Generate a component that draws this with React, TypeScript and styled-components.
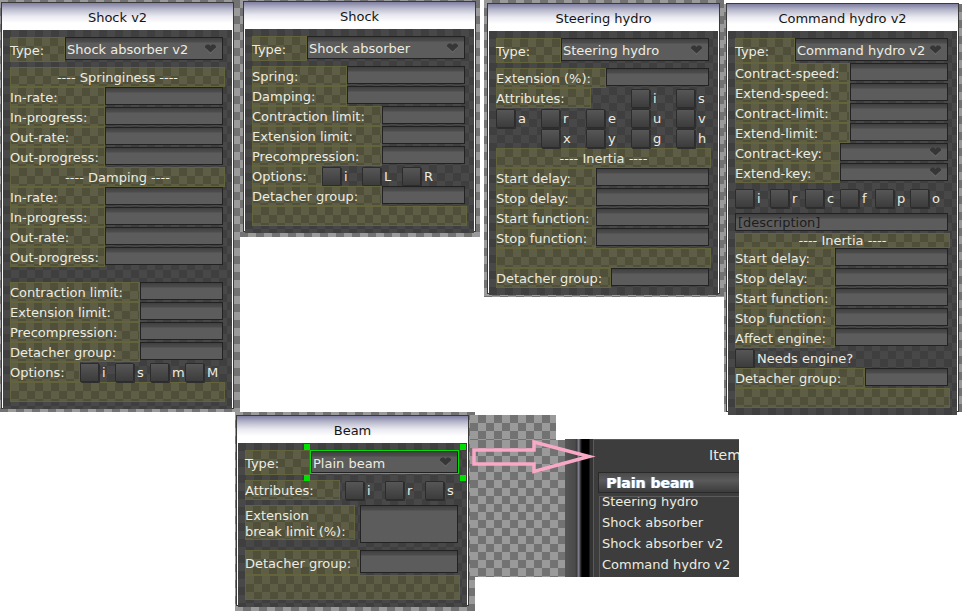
import React from "react";
import styled, { createGlobalStyle } from "styled-components";

const Global = createGlobalStyle`
  html, body { margin: 0; padding: 0; background: #fff; }
  #root { width: 976px; height: 616px; }
  * { box-sizing: border-box; }
`;

const checker = (a: string, b: string, s: number) => `
  background-color: ${a};
  background-image: conic-gradient(${b} 25%, transparent 0 50%, ${b} 0 75%, transparent 0);
  background-size: ${s * 2}px ${s * 2}px;
`;

const Canvas = styled.div`
  position: relative;
  width: 976px;
  height: 616px;
  overflow: hidden;
  background: #fff;
  font-family: "DejaVu Sans", sans-serif;
  font-size: 13px;
  color: #ecece0;
`;

const Backdrop = styled.div<{ $x: number; $y: number; $w: number; $h: number }>`
  position: absolute;
  left: ${(p) => p.$x}px;
  top: ${(p) => p.$y}px;
  width: ${(p) => p.$w}px;
  height: ${(p) => p.$h}px;
  ${checker("#9a9a9a", "#727272", 8)}
`;

const Win = styled.section<{ $x: number; $y: number; $w: number; $h: number }>`
  position: absolute;
  left: ${(p) => p.$x}px;
  top: ${(p) => p.$y}px;
  width: ${(p) => p.$w}px;
  height: ${(p) => p.$h}px;
  display: flex;
  flex-direction: column;
  background: #fff;
  border: 1px solid #3a3a3a;
`;

const Title = styled.h2`
  margin: 0;
  padding-top: 2px;
  height: 27px;
  flex: none;
  display: flex;
  align-items: center;
  justify-content: center;
  font-size: 13px;
  font-weight: 400;
  color: #151515;
  background: linear-gradient(#7f7fa0 0, #b8b8cc 6px, #e8e8f0 13px, #fff 20px);
`;

const Body = styled.div`
  flex: 1;
  margin: 0 1px 2px 1px;
  padding: 7px;
  ${checker("#3f3f3f", "#484848", 8)}
`;

const Row = styled.div<{ $h?: number }>`
  display: flex;
  align-items: flex-start;
  height: ${(p) => p.$h ?? 20}px;
`;

const Label = styled.div<{ $w: number; $h?: number }>`
  flex: none;
  width: ${(p) => p.$w}px;
  height: ${(p) => p.$h ?? 20}px;
  padding-top: 2px;
  display: flex;
  align-items: center;
  line-height: 16px;
  white-space: nowrap;
  border: 1px solid #63633c;
  border-left-width: 0;
  box-shadow: inset 1px 0 0 #63633c;
  ${checker("#5e5e47", "#4f4f3a", 8)}
`;

const Section = styled.div<{ $h?: number }>`
  width: 215px;
  height: ${(p) => p.$h ?? 20}px;
  display: flex;
  align-items: center;
  justify-content: center;
  border: 1px solid #63633c;
  white-space: nowrap;
  ${checker("#5e5e47", "#4f4f3a", 8)}
`;

const fieldFace = `
  border: 1px solid #222;
  background: linear-gradient(#3f3f3f 0, #474747 2px, #4c4c4c 4px, #5c5c5c 5px, #5c5c5c 100%);
`;

const Field = styled.div<{ $h?: number }>`
  flex: 1;
  height: ${(p) => p.$h ?? 18}px;
  margin-right: 2px;
  padding-left: 2px;
  color: #1d1d1d;
  line-height: 18px;
  overflow: hidden;
  ${fieldFace}
`;

const SelectBox = styled.div<{ $h?: number }>`
  flex: 1;
  position: relative;
  height: ${(p) => p.$h ?? 18}px;
  margin-right: 2px;
  padding: 2px 0 0 1px;
  display: flex;
  align-items: center;
  white-space: nowrap;
  ${fieldFace}
`;

const PickedSelect = styled(SelectBox)`
  margin-left: 1px;
  margin-top: 1px;
  box-shadow: 0 0 0 1px #00e000;
`;

const Heart = styled.svg`
  position: absolute;
  right: 5px;
  top: 50%;
  margin-top: -5px;
  width: 13px;
  height: 10px;
`;

const Handle = styled.i<{ $l?: number; $r?: number; $t?: number; $b?: number }>`
  position: absolute;
  width: 6px;
  height: 6px;
  background: #00e000;
  ${(p) => (p.$l !== undefined ? `left:${p.$l}px;` : "")}
  ${(p) => (p.$r !== undefined ? `right:${p.$r}px;` : "")}
  ${(p) => (p.$t !== undefined ? `top:${p.$t}px;` : "")}
  ${(p) => (p.$b !== undefined ? `bottom:${p.$b}px;` : "")}
`;

const Checks = styled.div<{ $pitch: number; $off?: number }>`
  display: grid;
  grid-auto-flow: column;
  grid-auto-columns: ${(p) => p.$pitch}px;
  margin-left: ${(p) => p.$off ?? 0}px;
`;

const Check = styled.label`
  display: flex;
  height: 20px;
  align-items: center;
  white-space: nowrap;
`;

const Box = styled.span`
  flex: none;
  width: 19px;
  height: 19px;
  margin-right: 3px;
  border: 1px solid #2c2c2c;
  border-radius: 1px;
  background: linear-gradient(#565656, #3c3c3c);
  box-shadow: 1px 1px 0 #2e2e2e;
`;

const Spacer = styled.div<{ $h: number; $w?: number }>`
  height: ${(p) => p.$h}px;
  width: ${(p) => p.$w ?? 0}px;
  flex: none;
`;

const Arrow = styled.svg`
  position: absolute;
  left: 468px;
  top: 436px;
  width: 130px;
  height: 42px;
`;

/* Cropped picture of the item list */
const Crop = styled.div`
  position: absolute;
  left: 565px;
  top: 439px;
  width: 174px;
  height: 138px;
  display: flex;
  overflow: hidden;
  background: linear-gradient(90deg, #555 0, #4a4a4a 10px, #3a3a3a 12px, #7c7c8c 13px, #7c7c8c 14px, #444 15px, #000 17px, #000 24px, #333 25px);
`;

const CropPanel = styled.div`
  margin: 0 0 0 28px;
  flex: 1;
  min-width: 0;
  padding: 1px 0 0 0;
  display: flex;
  flex-direction: column;
  background: #3d3d3d;
  border: 1px solid #5a5a5a;
  border-right: 0;
  border-bottom: 0;
`;

const CropTitle = styled.div`
  height: 27px;
  padding-left: 115px;
  display: flex;
  align-items: center;
  white-space: nowrap;
  font-size: 14px;
`;

const Picked = styled.div`
  height: 21px;
  margin: 4px 0 0 4px;
  padding-left: 7px;
  display: flex;
  align-items: center;
  font-size: 14px;
  font-weight: 700;
  color: #fff;
  text-shadow: 1px 0 0 #9fd0ff;
  border: 1px solid #2a2a2a;
  border-right: 0;
  background: linear-gradient(#4a4a4a, #5a5a5a 40%, #3c3c3c);
`;

const ItemList = styled.ul`
  margin: 3px 0 0 5px;
  padding: 0 0 0 2px;
  list-style: none;
  flex: 1;
  overflow: hidden;
  position: relative;
  border-left: 1px solid #5a5a5a;
  border-top: 1px solid #5a5a5a;
`;

const Item = styled.li`
  height: 21px;
  line-height: 21px;
  white-space: nowrap;
  font-size: 13px;
  &:first-child { margin-top: -6px; }
`;

const Caret = () => (
  <Heart viewBox="0 0 13 10">
    <path d="M1 2 L3 0.5 H5 L6.5 2 L8 0.5 H10 L12 2 V3.5 L6.5 9 L1 3.5 Z" fill="#363636" />
    <path d="M1.5 4 L6.5 8.5 L11.5 4 L12.5 3.5 L6.5 10 L0.5 3.5 Z" fill="#6a6a6a" />
  </Heart>
);

const FieldRow = ({ t, w }: { t: string; w: number }) => (
  <Row>
    <Label $w={w}>{t}</Label>
    <Field />
  </Row>
);

const Fields = ({ items, w }: { items: string[]; w: number }) => (
  <>
    {items.map((t) => (
      <FieldRow key={t} t={t} w={w} />
    ))}
  </>
);

const TypeRow = ({ t, w, h = 25 }: { t: string; w: number; h?: number }) => (
  <Row $h={h}>
    <Label $w={w} $h={h}>Type:</Label>
    <SelectBox $h={23}>
      {t}
      <Caret />
    </SelectBox>
  </Row>
);

const ChecksOf = ({ items, pitch, off }: { items: string[]; pitch: number; off?: number }) => (
  <Checks $pitch={pitch} $off={off}>
    {items.map((c) => (
      <Check key={c}>
        <Box />
        {c}
      </Check>
    ))}
  </Checks>
);

const Window = ({ x, y, w, h, title, children }: { x: number; y: number; w: number; h: number; title: string; children: React.ReactNode }) => (
  <Win $x={x} $y={y} $w={w} $h={h}>
    <Title>{title}</Title>
    <Body>{children}</Body>
  </Win>
);

export default function App() {
  return (
    <Canvas>
      <Global />
      <Backdrop $x={0} $y={0} $w={240} $h={412} />
      <Backdrop $x={240} $y={0} $w={240} $h={237} />
      <Backdrop $x={484} $y={0} $w={240} $h={297} />
      <Backdrop $x={724} $y={4} $w={238} $h={408} />
      <Backdrop $x={235} $y={412} $w={240} $h={199} />
      <Backdrop $x={470} $y={415} $w={86} $h={30} />
      <Backdrop $x={470} $y={440} $w={95} $h={137} />

      <Window x={1} y={2} w={233} h={407} title="Shock v2">
        <TypeRow t="Shock absorber v2" w={55} h={25} />
        <Spacer $h={5} />
        <Section>---- Springiness ----</Section>
        <Fields w={95} items={["In-rate:", "In-progress:", "Out-rate:", "Out-progress:"]} />
        <Section>---- Damping ----</Section>
        <Fields w={95} items={["In-rate:", "In-progress:", "Out-rate:", "Out-progress:"]} />
        <Spacer $h={15} />
        <Fields w={130} items={["Contraction limit:", "Extension limit:", "Precompression:", "Detacher group:"]} />
        <Row>
          <Label $w={70}>Options:</Label>
          <ChecksOf items={["i", "s", "m", "M"]} pitch={35} />
        </Row>
        <Section />
      </Window>

      <Window x={243} y={1} w={233} h={231} title="Shock">
        <TypeRow t="Shock absorber" w={55} />
        <Spacer $h={5} />
        <Fields w={95} items={["Spring:", "Damping:"]} />
        <Fields w={130} items={["Contraction limit:", "Extension limit:", "Precompression:"]} />
        <Row>
          <Label $w={70}>Options:</Label>
          <ChecksOf items={["i", "L", "R"]} pitch={40} />
        </Row>
        <FieldRow t="Detacher group:" w={130} />
        <Section />
      </Window>

      <Window x={487} y={3} w={233} h={291} title="Steering hydro">
        <TypeRow t="Steering hydro" w={65} />
        <Spacer $h={5} />
        <FieldRow t="Extension (%):" w={110} />
        <Row>
          <Label $w={95}>Attributes:</Label>
          <ChecksOf items={["i", "s"]} pitch={45} off={40} />
        </Row>
        <Row>
          <ChecksOf items={["a", "r", "e", "u", "v"]} pitch={45} />
        </Row>
        <Row>
          <ChecksOf items={["x", "y", "g", "h"]} pitch={45} off={45} />
        </Row>
        <Section>---- Inertia ----</Section>
        <Fields w={100} items={["Start delay:", "Stop delay:", "Start function:", "Stop function:"]} />
        <Section />
        <FieldRow t="Detacher group:" w={115} />
      </Window>

      <Window x={726} y={3} w={233} h={409} title="Command hydro v2">
        <TypeRow t="Command hydro v2" w={60} />
        <Fields w={115} items={["Contract-speed:", "Extend-speed:", "Contract-limit:", "Extend-limit:"]} />
        {["Contract-key:", "Extend-key:"].map((t) => (
          <Row key={t}>
            <Label $w={105}>{t}</Label>
            <SelectBox>
              <Caret />
            </SelectBox>
          </Row>
        ))}
        <Spacer $h={5} />
        <Row>
          <ChecksOf items={["i", "r", "c", "f", "p", "o"]} pitch={35} />
        </Row>
        <Spacer $h={5} />
        <Row $h={20}>
          <Field>[description]</Field>
        </Row>
        <Section $h={15}>---- Inertia ----</Section>
        <Fields w={100} items={["Start delay:", "Stop delay:", "Start function:", "Stop function:", "Affect engine:"]} />
        <Row>
          <Check>
            <Box />
            Needs engine?
          </Check>
        </Row>
        <FieldRow t="Detacher group:" w={130} />
        <Section />
      </Window>

      <Window x={236} y={415} w={233} h={191} title="Beam">
        <Row $h={25}>
          <Label $w={65} $h={25}>Type:</Label>
          <PickedSelect $h={22}>
            Plain beam
            <Caret />
            <Handle $l={-8} $t={-8} />
            <Handle $r={-9} $t={-8} />
            <Handle $l={-8} $b={-9} />
            <Handle $r={-9} $b={-9} />
          </PickedSelect>
        </Row>
        <Spacer $h={5} />
        <Row>
          <Label $w={95}>Attributes:</Label>
          <ChecksOf items={["i", "r", "s"]} pitch={40} off={5} />
        </Row>
        <Spacer $h={5} />
        <Row $h={45}>
          <Label $w={110} $h={35}>Extension<br />break limit (%):</Label>
          <Spacer $h={0} $w={5} />
          <Field $h={38} />
        </Row>
        <Row $h={25}>
          <Label $w={115} $h={25}>Detacher group:</Label>
          <Field $h={23} />
        </Row>
        <Section $h={25} />
      </Window>

      <Crop>
        <CropPanel>
          <CropTitle>Item</CropTitle>
          <Picked>Plain beam</Picked>
          <ItemList>
            <Item>Steering hydro</Item>
            <Item>Shock absorber</Item>
            <Item>Shock absorber v2</Item>
            <Item>Command hydro v2</Item>
          </ItemList>
        </CropPanel>
      </Crop>

      <Arrow viewBox="468 436 130 42">
        <path
          d="M474 450 H534 V442 L589 456.5 L534 471.5 V464 H474 Z"
          fill="none"
          stroke="#f9a8c6"
          strokeWidth="3.5"
        />
      </Arrow>
    </Canvas>
  );
}
